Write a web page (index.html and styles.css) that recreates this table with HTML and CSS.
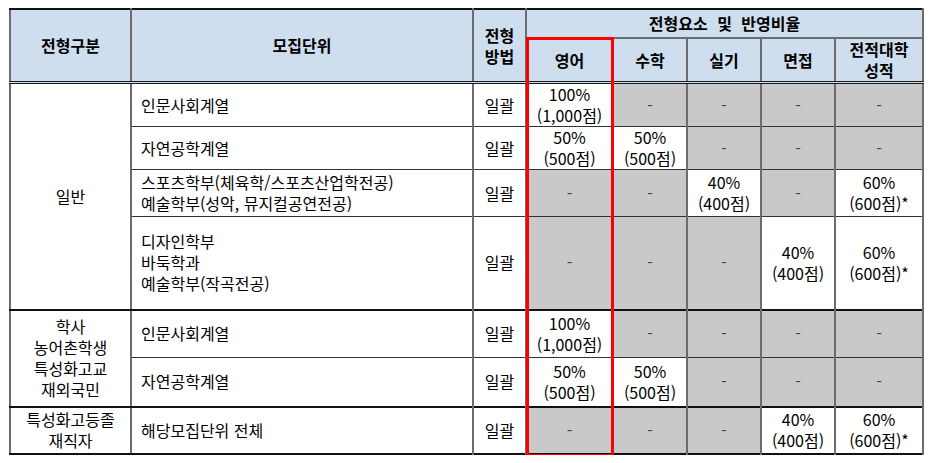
FILE: index.html
```html
<!DOCTYPE html>
<html lang="ko">
<head>
<meta charset="utf-8">
<link rel="stylesheet" href="styles.css">
</head>
<body>
<div class="wrap">
  <table class="tbl">
    <colgroup>
      <col class="c1"><col class="c2"><col class="c3"><col class="c4"><col class="c5"><col class="c6"><col class="c7"><col class="c8">
    </colgroup>
    <thead>
      <tr class="hr1">
        <th rowspan="2">전형구분</th>
        <th rowspan="2">모집단위</th>
        <th rowspan="2">전형<br>방법</th>
        <th colspan="5" class="grp">전형요소 및 반영비율</th>
      </tr>
      <tr class="hr2">
        <th>영어</th>
        <th>수학</th>
        <th>실기</th>
        <th>면접</th>
        <th>전적대학<br>성적</th>
      </tr>
    </thead>
    <tbody class="g1">
      <tr class="r1">
        <td rowspan="4" class="kind">일반</td>
        <td class="unit">인문사회계열</td>
        <td>일괄</td>
        <td>100%<br>(1,000점)</td>
        <td class="na">-</td><td class="na">-</td><td class="na">-</td><td class="na">-</td>
      </tr>
      <tr class="r2">
        <td class="unit">자연공학계열</td>
        <td>일괄</td>
        <td>50%<br>(500점)</td>
        <td>50%<br>(500점)</td>
        <td class="na">-</td><td class="na">-</td><td class="na">-</td>
      </tr>
      <tr class="r3">
        <td class="unit">스포츠학부(체육학/스포츠산업학전공)<br>예술학부(성악, 뮤지컬공연전공)</td>
        <td>일괄</td>
        <td class="na">-</td><td class="na">-</td>
        <td>40%<br>(400점)</td>
        <td class="na">-</td>
        <td>60%<br>(600점)*</td>
      </tr>
      <tr class="r4">
        <td class="unit">디자인학부<br>바둑학과<br>예술학부(작곡전공)</td>
        <td>일괄</td>
        <td class="na">-</td><td class="na">-</td><td class="na">-</td>
        <td>40%<br>(400점)</td>
        <td>60%<br>(600점)*</td>
      </tr>
    </tbody>
    <tbody class="g2">
      <tr class="r5">
        <td rowspan="2" class="kind">학사<br>농어촌학생<br>특성화고교<br>재외국민</td>
        <td class="unit">인문사회계열</td>
        <td>일괄</td>
        <td>100%<br>(1,000점)</td>
        <td class="na">-</td><td class="na">-</td><td class="na">-</td><td class="na">-</td>
      </tr>
      <tr class="r6">
        <td class="unit">자연공학계열</td>
        <td>일괄</td>
        <td>50%<br>(500점)</td>
        <td>50%<br>(500점)</td>
        <td class="na">-</td><td class="na">-</td><td class="na">-</td>
      </tr>
    </tbody>
    <tbody class="g3">
      <tr class="r7">
        <td class="kind">특성화고등졸<br>재직자</td>
        <td class="unit">해당모집단위 전체</td>
        <td>일괄</td>
        <td class="na">-</td><td class="na">-</td><td class="na">-</td>
        <td>40%<br>(400점)</td>
        <td>60%<br>(600점)*</td>
      </tr>
    </tbody>
  </table>
  <div class="highlight"></div>
</div>
</body>
</html>
```
FILE: styles.css
```css
html, body {
  margin: 0;
  padding: 0;
  background: #ffffff;
}
body {
  font-family: "Noto Sans CJK KR", "Noto Sans", sans-serif;
  color: #000000;
}
.wrap {
  position: relative;
  padding: 8px 0 0 9px;
}
.tbl {
  border-collapse: collapse;
  table-layout: fixed;
  width: 913px;
  border: 2px solid #111111;
  font-size: 16px;
  line-height: 21px;
}
.c1 { width: 121px; }
.c2 { width: 342px; }
.c3 { width: 53px; }
.c4 { width: 87px; }
.c5 { width: 74px; }
.c6 { width: 74px; }
.c7 { width: 74px; }
.c8 { width: 88px; }

th, td {
  padding: 0;
  text-align: center;
  vertical-align: middle;
  border-left: 2px solid #6c6c6c;
  border-right: 2px solid #6c6c6c;
}
th {
  background: #cfdeee;
  font-weight: bold;
  border-top: 2px solid #6c6c6c;
  border-bottom: 2px solid #6c6c6c;
}
th.grp {
  word-spacing: 5px;
}
.hr1 { height: 29px; }
.hr2 { height: 43px; }
.hr1 th { border-top: 2px solid #111111; }
.hr2 th, .hr1 th[rowspan] { border-bottom: 3px double #1a1a1a; }

td {
  border-top: 1px solid #333333;
  border-bottom: 1px solid #333333;
}
td.unit {
  text-align: left;
  padding-left: 9px;
}
td.na {
  background: #c9c9c9;
  color: #444444;
}
.r1 { height: 42px; }
.r2 { height: 43px; }
.r3 { height: 47px; }
.r4 { height: 93px; }
.r5 { height: 48px; }
.r6 { height: 49px; }
.r7 { height: 47px; }

.g2 tr:first-child td, .g3 tr:first-child td {
  border-top: 2px solid #111111;
}
.kind {
  border-bottom: 2px solid #111111;
}

.highlight {
  position: absolute;
  left: 526px;
  top: 37px;
  width: 82px;
  height: 414px;
  border: 3px solid #ff0000;
}
```
